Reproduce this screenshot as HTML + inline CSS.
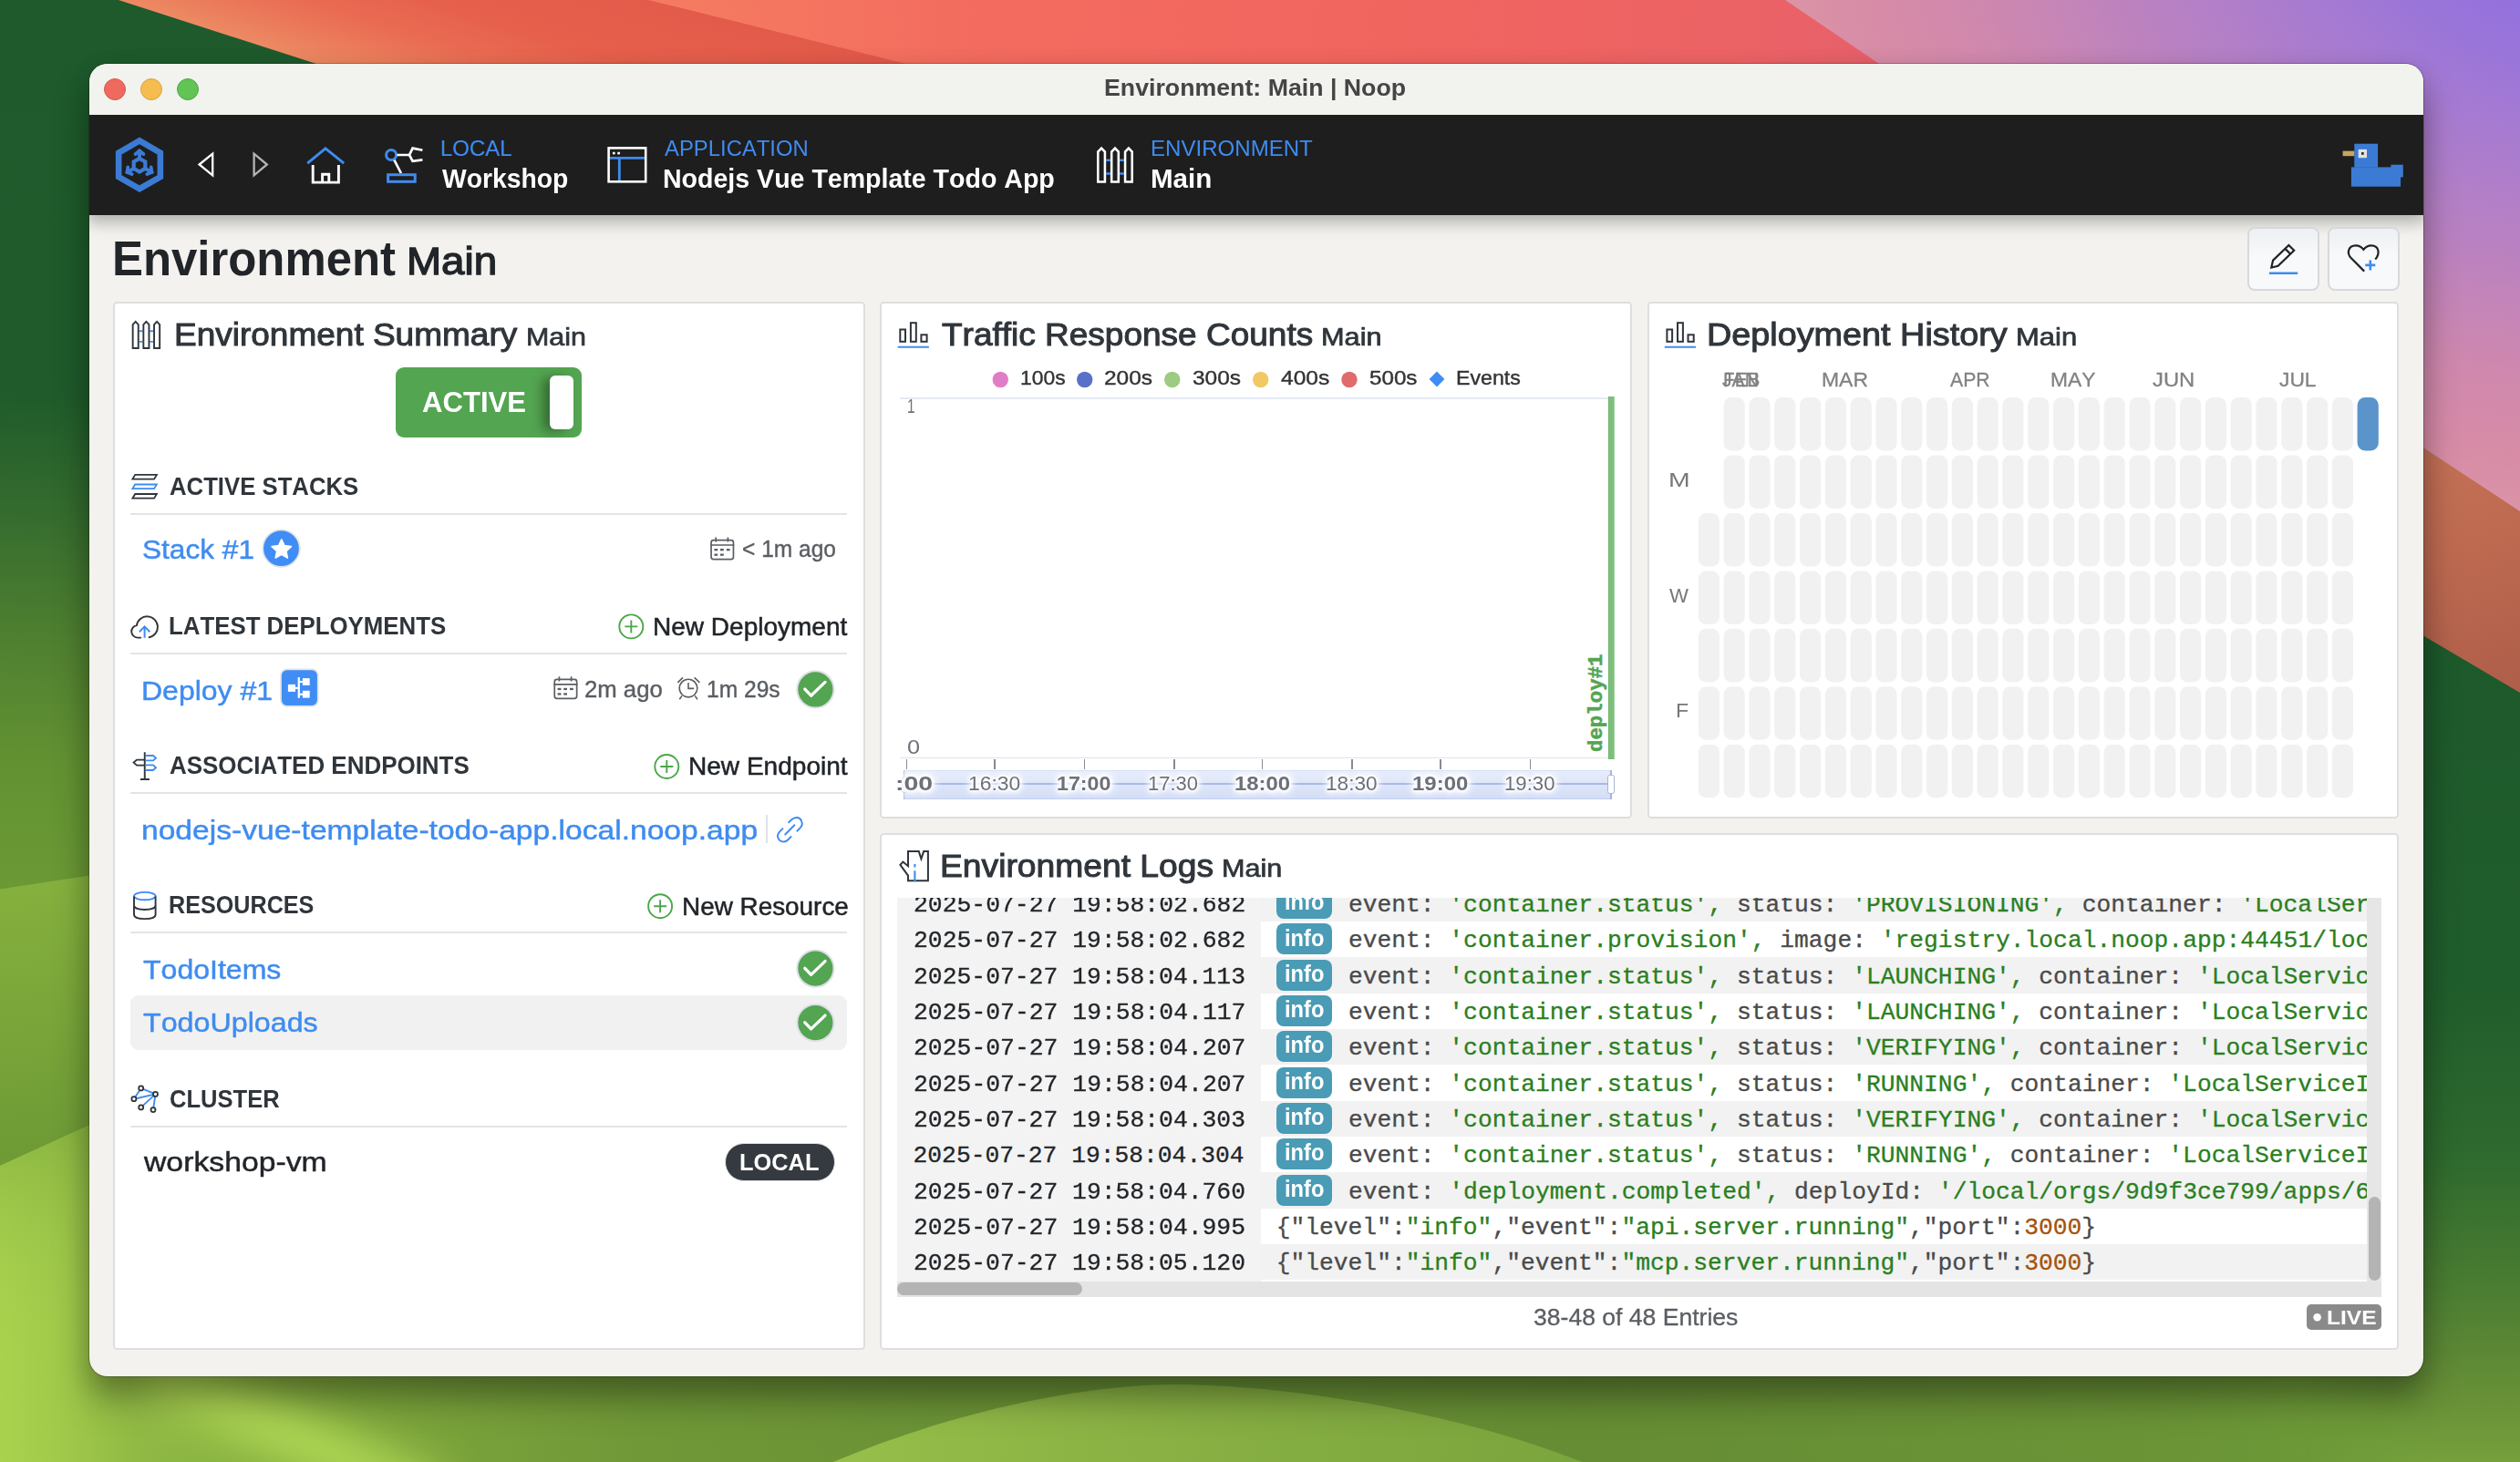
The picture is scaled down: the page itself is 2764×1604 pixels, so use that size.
<!DOCTYPE html>
<html><head><meta charset="utf-8"><title>Environment: Main | Noop</title>
<style>
html,body{margin:0;padding:0;}
body{width:2764px;height:1604px;overflow:hidden;position:relative;background:#1f5a2b;font-family:"Liberation Sans",sans-serif;}
.b{position:absolute;box-sizing:border-box;}
.t{position:absolute;white-space:pre;line-height:1;transform-origin:0 0;font-kerning:none;}
svg{position:absolute;left:0;top:0;}
</style></head><body>
<svg width="2764" height="1604" viewBox="0 0 2764 1604" preserveAspectRatio="none">
<defs>
<linearGradient id="gA" gradientUnits="userSpaceOnUse" x1="130" y1="0" x2="206.8" y2="-238">
 <stop offset="0" stop-color="#ec8a63"/><stop offset="0.1" stop-color="#eb7d5c"/><stop offset="0.25" stop-color="#e96b52"/><stop offset="0.42" stop-color="#e6604c"/><stop offset="0.7" stop-color="#e35b4a"/><stop offset="1" stop-color="#de5648"/></linearGradient>
<linearGradient id="gB" gradientUnits="userSpaceOnUse" x1="760" y1="0" x2="2050" y2="0">
 <stop offset="0" stop-color="#f57a61"/><stop offset="0.25" stop-color="#f36b5f"/><stop offset="0.6" stop-color="#f1655f"/><stop offset="0.9" stop-color="#ec6366"/><stop offset="1" stop-color="#e6606a"/></linearGradient>
<radialGradient id="gP" gradientUnits="userSpaceOnUse" cx="2860" cy="-110" r="950" gradientTransform="translate(2860,-110) scale(1.35,1) translate(-2860,110)">
 <stop offset="0.08" stop-color="#8c6de0"/><stop offset="0.2" stop-color="#9a75d9"/><stop offset="0.3" stop-color="#aa7ccf"/><stop offset="0.42" stop-color="#bb82c0"/><stop offset="0.55" stop-color="#cf88ae"/><stop offset="0.64" stop-color="#d78ba6"/><stop offset="0.74" stop-color="#dc98a7"/><stop offset="1" stop-color="#dd9ea8"/></radialGradient>
<linearGradient id="gO" gradientUnits="userSpaceOnUse" x1="2600" y1="480" x2="2700" y2="760">
 <stop offset="0" stop-color="#c47258"/><stop offset="0.5" stop-color="#be6a51"/><stop offset="1" stop-color="#b05f4a"/></linearGradient>
<linearGradient id="gR" gradientUnits="userSpaceOnUse" x1="0" y1="660" x2="0" y2="1604">
 <stop offset="0" stop-color="#1d592b"/><stop offset="0.45" stop-color="#205d2c"/><stop offset="0.65" stop-color="#2f6a2e"/><stop offset="0.8" stop-color="#4b7d32"/><stop offset="0.92" stop-color="#678f37"/><stop offset="1" stop-color="#75a03c"/></linearGradient>
<linearGradient id="gL" gradientUnits="userSpaceOnUse" x1="0" y1="0" x2="-40" y2="1000">
 <stop offset="0" stop-color="#1e5a2b"/><stop offset="0.43" stop-color="#1f5b2b"/><stop offset="0.55" stop-color="#336a2e"/><stop offset="0.7" stop-color="#4f8030"/><stop offset="0.83" stop-color="#629132"/><stop offset="1" stop-color="#6c9b35"/></linearGradient>
<linearGradient id="gL2" gradientUnits="userSpaceOnUse" x1="0" y1="965" x2="40" y2="1260">
 <stop offset="0" stop-color="#86b13e"/><stop offset="0.5" stop-color="#7aa63a"/><stop offset="1" stop-color="#6f9b36"/></linearGradient>
<linearGradient id="gL3" gradientUnits="userSpaceOnUse" x1="0" y1="0" x2="700" y2="0">
 <stop offset="0" stop-color="#a9d24e"/><stop offset="0.1" stop-color="#a0c94a"/><stop offset="0.22" stop-color="#8fb944"/><stop offset="0.5" stop-color="#82ab3e"/><stop offset="0.75" stop-color="#78a03a"/><stop offset="1" stop-color="#709837"/></linearGradient>
<linearGradient id="gL3v" gradientUnits="userSpaceOnUse" x1="0" y1="1200" x2="0" y2="1500">
 <stop offset="0" stop-color="#7aa63a" stop-opacity="0.75"/><stop offset="0.5" stop-color="#8cb842" stop-opacity="0.3"/><stop offset="1" stop-color="#a9d24e" stop-opacity="0"/></linearGradient>
<linearGradient id="gBot" gradientUnits="userSpaceOnUse" x1="700" y1="0" x2="2764" y2="0">
 <stop offset="0" stop-color="#709837"/><stop offset="0.15" stop-color="#6b9336"/><stop offset="0.5" stop-color="#668d34"/><stop offset="0.8" stop-color="#6a9336"/><stop offset="1" stop-color="#70a03a"/></linearGradient>
<linearGradient id="gH" gradientUnits="userSpaceOnUse" x1="900" y1="0" x2="1760" y2="0">
 <stop offset="0" stop-color="#97bf4a"/><stop offset="0.45" stop-color="#88b043"/><stop offset="1" stop-color="#7aa43d"/></linearGradient>
<linearGradient id="mRg" gradientUnits="userSpaceOnUse" x1="2530" y1="0" x2="2665" y2="0"><stop offset="0" stop-color="#000"/><stop offset="1" stop-color="#fff"/></linearGradient>
<mask id="mR" maskUnits="userSpaceOnUse" x="2480" y="380" width="284" height="1224"><rect x="2480" y="380" width="284" height="1224" fill="url(#mRg)"/></mask>
<filter id="bl" x="-50%" y="-50%" width="200%" height="200%"><feGaussianBlur stdDeviation="22"/></filter>
</defs>
<rect width="2764" height="1604" fill="#1f5a2b"/>
<!-- right strip (drawn bottom-up, overlapping) -->
<!-- bottom strip -->
<rect x="690" y="1440" width="2074" height="164" fill="url(#gBot)"/>
<rect x="2480" y="380" width="284" height="1224" fill="url(#gR)" mask="url(#mR)"/>
<path d="M895,1612 C1040,1548 1190,1519 1290,1519 C1400,1519 1600,1546 1755,1612 Z" fill="url(#gH)"/>
<!-- left strip -->
<rect x="0" y="0" width="400" height="1300" fill="url(#gL)"/>
<polygon points="0,975.4 400,915 400,1500 0,1500" fill="url(#gL2)"/>
<polygon points="0,1279 400,1097 700,1097 700,1604 0,1604" fill="url(#gL3)"/>
<polygon points="0,1279 400,1097 700,1097 700,1604 0,1604" fill="url(#gL3v)"/>
<path d="M480,1650 L150,1496" stroke="#b4dc56" stroke-width="60" filter="url(#bl)" opacity="0.85"/>
<!-- right orange -->
<polygon points="2480,360 2764,360 2764,760 2480,592.3" fill="url(#gO)"/>
<!-- top -->
<polygon points="1900,0 2764,0 2764,561 2480,373.8 2480,120 1900,120" fill="url(#gP)"/>
<polygon points="600,0 1958,0 2135,120 600,120" fill="url(#gB)"/>
<polygon points="100,0 711,0 1196,120 100,120" fill="url(#gA)"/>
<polygon points="0,0 130,0 502,120 0,120" fill="#1e5a2c"/>
</svg>
<div class="b" style="left:98.00px;top:70.00px;width:2560.00px;height:1439.50px;border-radius:20px;background:#f3f2ee;box-shadow:0 0 0 1px rgba(20,30,10,0.30),0 26px 38px 0px rgba(0,0,0,0.34),0 6px 26px rgba(0,0,0,0.11);overflow:hidden;"><div class="b" style="left:0;top:56px;width:100%;height:109.5px;background:#1e1e1e;box-shadow:0 6px 16px 2px rgba(0,0,0,0.28);"></div><div class="b" style="left:0;top:0;width:100%;height:56px;background:#f2f3ee;"></div></div>
<div class="b" style="left:114.00px;top:86.00px;width:24.00px;height:24.00px;border-radius:50%;background:#ee6a5f;border:1px solid #d5574b;"></div>
<div class="b" style="left:154.00px;top:86.00px;width:24.00px;height:24.00px;border-radius:50%;background:#f5bd4f;border:1px solid #d9a23c;"></div>
<div class="b" style="left:194.00px;top:86.00px;width:24.00px;height:24.00px;border-radius:50%;background:#61c454;border:1px solid #4fa944;"></div>
<div class="b" style="left:2465.30px;top:249.20px;width:78.70px;height:69.60px;border-radius:8px;border:2px solid #d6d9dd;background:linear-gradient(#eeeff1,#f8f9fa 45%);"></div>
<div class="b" style="left:2553.10px;top:249.20px;width:78.70px;height:69.60px;border-radius:8px;border:2px solid #d6d9dd;background:linear-gradient(#eeeff1,#f8f9fa 45%);"></div>
<div class="b" style="left:124.00px;top:331.00px;width:825.00px;height:1150.00px;border:2px solid #dedede;border-radius:4.5px;background:#fff;"></div>
<div class="b" style="left:965.00px;top:331.00px;width:825.00px;height:567.00px;border:2px solid #dedede;border-radius:4.5px;background:#fff;"></div>
<div class="b" style="left:1807.00px;top:331.00px;width:824.00px;height:567.00px;border:2px solid #dedede;border-radius:4.5px;background:#fff;"></div>
<div class="b" style="left:965.00px;top:914.00px;width:1666.00px;height:567.00px;border:2px solid #dedede;border-radius:4.5px;background:#fff;"></div>
<div class="b" style="left:434.00px;top:403.20px;width:204.00px;height:76.60px;border-radius:9px;background:#53a551;"></div>
<div class="b" style="left:603.30px;top:411.70px;width:26.00px;height:59.20px;border-radius:6px;background:#fff;box-shadow:-8px 2px 12px rgba(0,0,0,0.34);"></div>
<div class="b" style="left:143.20px;top:563.00px;width:786.20px;height:2.00px;background:#e3e4e6;"></div>
<div class="b" style="left:143.20px;top:715.90px;width:786.20px;height:2.00px;background:#e3e4e6;"></div>
<div class="b" style="left:143.20px;top:869.10px;width:786.20px;height:2.00px;background:#e3e4e6;"></div>
<div class="b" style="left:840.00px;top:894.40px;width:2.00px;height:30.40px;background:#dfe1e7;"></div>
<div class="b" style="left:143.20px;top:1022.40px;width:786.20px;height:2.00px;background:#e3e4e6;"></div>
<div class="b" style="left:143.20px;top:1092.00px;width:786.20px;height:59.80px;border-radius:9px;background:#f1f1f1;"></div>
<div class="b" style="left:143.20px;top:1235.10px;width:786.20px;height:2.00px;background:#e3e4e6;"></div>
<div class="b" style="left:795.20px;top:1253.80px;width:120.50px;height:42.40px;border-radius:22px;background:#343a40;border:1.6px solid #dfe1e6;"></div>
<div class="b" style="left:986.70px;top:436.20px;width:784.00px;height:1.80px;background:#e4e9f4;"></div>
<div class="b" style="left:986.70px;top:831.00px;width:784.00px;height:1.40px;background:#dfe3ec;"></div>
<div class="b" style="left:1764.00px;top:435.40px;width:6.80px;height:398.00px;background:#7fbf7d;border-left:1.4px solid #6ab368;border-right:1px solid #9fd09d;"></div>
<div class="b" style="left:993.50px;top:832.80px;width:1.60px;height:10.80px;background:#868a94;"></div>
<div class="b" style="left:1090.10px;top:832.80px;width:1.60px;height:10.80px;background:#868a94;"></div>
<div class="b" style="left:1188.50px;top:832.80px;width:1.60px;height:10.80px;background:#868a94;"></div>
<div class="b" style="left:1287.10px;top:832.80px;width:1.60px;height:10.80px;background:#868a94;"></div>
<div class="b" style="left:1383.90px;top:832.80px;width:1.60px;height:10.80px;background:#868a94;"></div>
<div class="b" style="left:1482.40px;top:832.80px;width:1.60px;height:10.80px;background:#868a94;"></div>
<div class="b" style="left:1579.40px;top:832.80px;width:1.60px;height:10.80px;background:#868a94;"></div>
<div class="b" style="left:1677.90px;top:832.80px;width:1.60px;height:10.80px;background:#868a94;"></div>
<div class="b" style="left:991.70px;top:844.60px;width:775.00px;height:32.40px;background:linear-gradient(#e6edfb,#d3def6);border-top:1px solid #d5dff5;border-bottom:1px solid #c3cfee;"></div>
<div class="b" style="left:991.70px;top:859.40px;width:775.00px;height:1.50px;background:#a9b9e6;"></div>
<div class="b" style="left:988.60px;top:851.60px;width:6.60px;height:18.60px;background:#fff;border:1.3px solid #acb8d1;border-radius:2px;"></div>
<div class="b" style="left:991.20px;top:845.00px;width:1.30px;height:31.70px;background:#acb8d1;"></div>
<div class="b" style="left:1765.60px;top:844.60px;width:2.20px;height:32.40px;background:#a9b5d2;"></div>
<div class="b" style="left:1762.60px;top:850.40px;width:8.00px;height:20.60px;background:#fff;border:1.5px solid #a9b5d2;border-radius:2.5px;"></div>
<div class="b" style="left:968.00px;top:844.00px;width:17.00px;height:34.00px;background:#fff;"></div>
<div class="b" style="left:984.00px;top:985.00px;width:1628.40px;height:420.60px;overflow:hidden;background:#fff;"><div class="b" style="left:0;top:0;width:399.3px;height:100%;background:#f3f3f3;"></div><div class="b" style="left:399.3px;top:-13.30px;width:1213px;height:39.33px;background:#f2f2f2;"></div><span id="t63" class="t " style="left:17.54px;top:-4.85px;font-size:26.30px;color:#212529;font-family:'Liberation Mono', monospace;transform:scaleX(1.0035);-webkit-text-stroke:0.30px #212529;">2025-07-27 19:58:02.682</span><div class="b" style="left:416.00px;top:-10.90px;width:60.6px;height:34px;border-radius:8px;background:#4a9bb5;"></div><span id="t64" class="t " style="left:424.55px;top:-7.83px;font-size:24.96px;color:#fff;font-weight:700;transform:scaleX(0.9485);">info</span><span id="t65" class="t " style="left:494.89px;top:-4.85px;font-size:26.30px;color:#4a4a4a;font-family:'Liberation Mono', monospace;-webkit-text-stroke:0.30px #4a4a4a;">event: </span><span id="t66" class="t " style="left:605.35px;top:-4.85px;font-size:26.30px;color:#2b7f1f;font-family:'Liberation Mono', monospace;-webkit-text-stroke:0.30px #2b7f1f;">&#x27;container.status&#x27;,</span><span id="t67" class="t " style="left:905.17px;top:-4.85px;font-size:26.30px;color:#4a4a4a;font-family:'Liberation Mono', monospace;-webkit-text-stroke:0.30px #4a4a4a;"> status: </span><span id="t68" class="t " style="left:1047.19px;top:-4.85px;font-size:26.30px;color:#2b7f1f;font-family:'Liberation Mono', monospace;-webkit-text-stroke:0.30px #2b7f1f;">&#x27;PROVISIONING&#x27;,</span><span id="t69" class="t " style="left:1283.89px;top:-4.85px;font-size:26.30px;color:#4a4a4a;font-family:'Liberation Mono', monospace;-webkit-text-stroke:0.30px #4a4a4a;"> container: </span><span id="t70" class="t " style="left:1473.25px;top:-4.85px;font-size:26.30px;color:#2b7f1f;font-family:'Liberation Mono', monospace;-webkit-text-stroke:0.30px #2b7f1f;">&#x27;LocalServiceInstance&#x27;</span><span id="t71" class="t " style="left:17.54px;top:34.48px;font-size:26.30px;color:#212529;font-family:'Liberation Mono', monospace;transform:scaleX(1.0035);-webkit-text-stroke:0.30px #212529;">2025-07-27 19:58:02.682</span><div class="b" style="left:416.00px;top:28.43px;width:60.6px;height:34px;border-radius:8px;background:#4a9bb5;"></div><span id="t72" class="t " style="left:424.55px;top:31.50px;font-size:24.96px;color:#fff;font-weight:700;transform:scaleX(0.9485);">info</span><span id="t73" class="t " style="left:494.89px;top:34.48px;font-size:26.30px;color:#4a4a4a;font-family:'Liberation Mono', monospace;-webkit-text-stroke:0.30px #4a4a4a;">event: </span><span id="t74" class="t " style="left:605.35px;top:34.48px;font-size:26.30px;color:#2b7f1f;font-family:'Liberation Mono', monospace;-webkit-text-stroke:0.30px #2b7f1f;">&#x27;container.provision&#x27;,</span><span id="t75" class="t " style="left:952.51px;top:34.48px;font-size:26.30px;color:#4a4a4a;font-family:'Liberation Mono', monospace;-webkit-text-stroke:0.30px #4a4a4a;"> image: </span><span id="t76" class="t " style="left:1078.75px;top:34.48px;font-size:26.30px;color:#2b7f1f;font-family:'Liberation Mono', monospace;-webkit-text-stroke:0.30px #2b7f1f;">&#x27;registry.local.noop.app:44451/local/todo&#x27;</span><div class="b" style="left:399.3px;top:65.36px;width:1213px;height:39.33px;background:#f2f2f2;"></div><span id="t77" class="t " style="left:17.55px;top:73.81px;font-size:26.30px;color:#212529;font-family:'Liberation Mono', monospace;transform:scaleX(1.0029);-webkit-text-stroke:0.30px #212529;">2025-07-27 19:58:04.113</span><div class="b" style="left:416.00px;top:67.76px;width:60.6px;height:34px;border-radius:8px;background:#4a9bb5;"></div><span id="t78" class="t " style="left:424.55px;top:70.83px;font-size:24.96px;color:#fff;font-weight:700;transform:scaleX(0.9485);">info</span><span id="t79" class="t " style="left:494.89px;top:73.81px;font-size:26.30px;color:#4a4a4a;font-family:'Liberation Mono', monospace;-webkit-text-stroke:0.30px #4a4a4a;">event: </span><span id="t80" class="t " style="left:605.35px;top:73.81px;font-size:26.30px;color:#2b7f1f;font-family:'Liberation Mono', monospace;-webkit-text-stroke:0.30px #2b7f1f;">&#x27;container.status&#x27;,</span><span id="t81" class="t " style="left:905.17px;top:73.81px;font-size:26.30px;color:#4a4a4a;font-family:'Liberation Mono', monospace;-webkit-text-stroke:0.30px #4a4a4a;"> status: </span><span id="t82" class="t " style="left:1047.19px;top:73.81px;font-size:26.30px;color:#2b7f1f;font-family:'Liberation Mono', monospace;-webkit-text-stroke:0.30px #2b7f1f;">&#x27;LAUNCHING&#x27;,</span><span id="t83" class="t " style="left:1236.55px;top:73.81px;font-size:26.30px;color:#4a4a4a;font-family:'Liberation Mono', monospace;-webkit-text-stroke:0.30px #4a4a4a;"> container: </span><span id="t84" class="t " style="left:1425.91px;top:73.81px;font-size:26.30px;color:#2b7f1f;font-family:'Liberation Mono', monospace;-webkit-text-stroke:0.30px #2b7f1f;">&#x27;LocalServiceInstance&#x27;</span><span id="t85" class="t " style="left:17.54px;top:113.14px;font-size:26.30px;color:#212529;font-family:'Liberation Mono', monospace;transform:scaleX(1.0040);-webkit-text-stroke:0.30px #212529;">2025-07-27 19:58:04.117</span><div class="b" style="left:416.00px;top:107.09px;width:60.6px;height:34px;border-radius:8px;background:#4a9bb5;"></div><span id="t86" class="t " style="left:424.55px;top:110.16px;font-size:24.96px;color:#fff;font-weight:700;transform:scaleX(0.9485);">info</span><span id="t87" class="t " style="left:494.89px;top:113.14px;font-size:26.30px;color:#4a4a4a;font-family:'Liberation Mono', monospace;-webkit-text-stroke:0.30px #4a4a4a;">event: </span><span id="t88" class="t " style="left:605.35px;top:113.14px;font-size:26.30px;color:#2b7f1f;font-family:'Liberation Mono', monospace;-webkit-text-stroke:0.30px #2b7f1f;">&#x27;container.status&#x27;,</span><span id="t89" class="t " style="left:905.17px;top:113.14px;font-size:26.30px;color:#4a4a4a;font-family:'Liberation Mono', monospace;-webkit-text-stroke:0.30px #4a4a4a;"> status: </span><span id="t90" class="t " style="left:1047.19px;top:113.14px;font-size:26.30px;color:#2b7f1f;font-family:'Liberation Mono', monospace;-webkit-text-stroke:0.30px #2b7f1f;">&#x27;LAUNCHING&#x27;,</span><span id="t91" class="t " style="left:1236.55px;top:113.14px;font-size:26.30px;color:#4a4a4a;font-family:'Liberation Mono', monospace;-webkit-text-stroke:0.30px #4a4a4a;"> container: </span><span id="t92" class="t " style="left:1425.91px;top:113.14px;font-size:26.30px;color:#2b7f1f;font-family:'Liberation Mono', monospace;-webkit-text-stroke:0.30px #2b7f1f;">&#x27;LocalServiceInstance&#x27;</span><div class="b" style="left:399.3px;top:144.02px;width:1213px;height:39.33px;background:#f2f2f2;"></div><span id="t93" class="t " style="left:17.54px;top:152.47px;font-size:26.30px;color:#212529;font-family:'Liberation Mono', monospace;transform:scaleX(1.0040);-webkit-text-stroke:0.30px #212529;">2025-07-27 19:58:04.207</span><div class="b" style="left:416.00px;top:146.42px;width:60.6px;height:34px;border-radius:8px;background:#4a9bb5;"></div><span id="t94" class="t " style="left:424.55px;top:149.49px;font-size:24.96px;color:#fff;font-weight:700;transform:scaleX(0.9485);">info</span><span id="t95" class="t " style="left:494.89px;top:152.47px;font-size:26.30px;color:#4a4a4a;font-family:'Liberation Mono', monospace;-webkit-text-stroke:0.30px #4a4a4a;">event: </span><span id="t96" class="t " style="left:605.35px;top:152.47px;font-size:26.30px;color:#2b7f1f;font-family:'Liberation Mono', monospace;-webkit-text-stroke:0.30px #2b7f1f;">&#x27;container.status&#x27;,</span><span id="t97" class="t " style="left:905.17px;top:152.47px;font-size:26.30px;color:#4a4a4a;font-family:'Liberation Mono', monospace;-webkit-text-stroke:0.30px #4a4a4a;"> status: </span><span id="t98" class="t " style="left:1047.19px;top:152.47px;font-size:26.30px;color:#2b7f1f;font-family:'Liberation Mono', monospace;-webkit-text-stroke:0.30px #2b7f1f;">&#x27;VERIFYING&#x27;,</span><span id="t99" class="t " style="left:1236.55px;top:152.47px;font-size:26.30px;color:#4a4a4a;font-family:'Liberation Mono', monospace;-webkit-text-stroke:0.30px #4a4a4a;"> container: </span><span id="t100" class="t " style="left:1425.91px;top:152.47px;font-size:26.30px;color:#2b7f1f;font-family:'Liberation Mono', monospace;-webkit-text-stroke:0.30px #2b7f1f;">&#x27;LocalServiceInstance&#x27;</span><span id="t101" class="t " style="left:17.54px;top:191.80px;font-size:26.30px;color:#212529;font-family:'Liberation Mono', monospace;transform:scaleX(1.0040);-webkit-text-stroke:0.30px #212529;">2025-07-27 19:58:04.207</span><div class="b" style="left:416.00px;top:185.75px;width:60.6px;height:34px;border-radius:8px;background:#4a9bb5;"></div><span id="t102" class="t " style="left:424.55px;top:188.82px;font-size:24.96px;color:#fff;font-weight:700;transform:scaleX(0.9485);">info</span><span id="t103" class="t " style="left:494.89px;top:191.80px;font-size:26.30px;color:#4a4a4a;font-family:'Liberation Mono', monospace;-webkit-text-stroke:0.30px #4a4a4a;">event: </span><span id="t104" class="t " style="left:605.35px;top:191.80px;font-size:26.30px;color:#2b7f1f;font-family:'Liberation Mono', monospace;-webkit-text-stroke:0.30px #2b7f1f;">&#x27;container.status&#x27;,</span><span id="t105" class="t " style="left:905.17px;top:191.80px;font-size:26.30px;color:#4a4a4a;font-family:'Liberation Mono', monospace;-webkit-text-stroke:0.30px #4a4a4a;"> status: </span><span id="t106" class="t " style="left:1047.19px;top:191.80px;font-size:26.30px;color:#2b7f1f;font-family:'Liberation Mono', monospace;-webkit-text-stroke:0.30px #2b7f1f;">&#x27;RUNNING&#x27;,</span><span id="t107" class="t " style="left:1204.99px;top:191.80px;font-size:26.30px;color:#4a4a4a;font-family:'Liberation Mono', monospace;-webkit-text-stroke:0.30px #4a4a4a;"> container: </span><span id="t108" class="t " style="left:1394.35px;top:191.80px;font-size:26.30px;color:#2b7f1f;font-family:'Liberation Mono', monospace;-webkit-text-stroke:0.30px #2b7f1f;">&#x27;LocalServiceInstance&#x27;</span><div class="b" style="left:399.3px;top:222.68px;width:1213px;height:39.33px;background:#f2f2f2;"></div><span id="t109" class="t " style="left:17.55px;top:231.13px;font-size:26.30px;color:#212529;font-family:'Liberation Mono', monospace;transform:scaleX(1.0029);-webkit-text-stroke:0.30px #212529;">2025-07-27 19:58:04.303</span><div class="b" style="left:416.00px;top:225.08px;width:60.6px;height:34px;border-radius:8px;background:#4a9bb5;"></div><span id="t110" class="t " style="left:424.55px;top:228.15px;font-size:24.96px;color:#fff;font-weight:700;transform:scaleX(0.9485);">info</span><span id="t111" class="t " style="left:494.89px;top:231.13px;font-size:26.30px;color:#4a4a4a;font-family:'Liberation Mono', monospace;-webkit-text-stroke:0.30px #4a4a4a;">event: </span><span id="t112" class="t " style="left:605.35px;top:231.13px;font-size:26.30px;color:#2b7f1f;font-family:'Liberation Mono', monospace;-webkit-text-stroke:0.30px #2b7f1f;">&#x27;container.status&#x27;,</span><span id="t113" class="t " style="left:905.17px;top:231.13px;font-size:26.30px;color:#4a4a4a;font-family:'Liberation Mono', monospace;-webkit-text-stroke:0.30px #4a4a4a;"> status: </span><span id="t114" class="t " style="left:1047.19px;top:231.13px;font-size:26.30px;color:#2b7f1f;font-family:'Liberation Mono', monospace;-webkit-text-stroke:0.30px #2b7f1f;">&#x27;VERIFYING&#x27;,</span><span id="t115" class="t " style="left:1236.55px;top:231.13px;font-size:26.30px;color:#4a4a4a;font-family:'Liberation Mono', monospace;-webkit-text-stroke:0.30px #4a4a4a;"> container: </span><span id="t116" class="t " style="left:1425.91px;top:231.13px;font-size:26.30px;color:#2b7f1f;font-family:'Liberation Mono', monospace;-webkit-text-stroke:0.30px #2b7f1f;">&#x27;LocalServiceInstance&#x27;</span><span id="t117" class="t " style="left:17.55px;top:270.46px;font-size:26.30px;color:#212529;font-family:'Liberation Mono', monospace;-webkit-text-stroke:0.30px #212529;">2025-07-27 19:58:04.304</span><div class="b" style="left:416.00px;top:264.41px;width:60.6px;height:34px;border-radius:8px;background:#4a9bb5;"></div><span id="t118" class="t " style="left:424.55px;top:267.48px;font-size:24.96px;color:#fff;font-weight:700;transform:scaleX(0.9485);">info</span><span id="t119" class="t " style="left:494.89px;top:270.46px;font-size:26.30px;color:#4a4a4a;font-family:'Liberation Mono', monospace;-webkit-text-stroke:0.30px #4a4a4a;">event: </span><span id="t120" class="t " style="left:605.35px;top:270.46px;font-size:26.30px;color:#2b7f1f;font-family:'Liberation Mono', monospace;-webkit-text-stroke:0.30px #2b7f1f;">&#x27;container.status&#x27;,</span><span id="t121" class="t " style="left:905.17px;top:270.46px;font-size:26.30px;color:#4a4a4a;font-family:'Liberation Mono', monospace;-webkit-text-stroke:0.30px #4a4a4a;"> status: </span><span id="t122" class="t " style="left:1047.19px;top:270.46px;font-size:26.30px;color:#2b7f1f;font-family:'Liberation Mono', monospace;-webkit-text-stroke:0.30px #2b7f1f;">&#x27;RUNNING&#x27;,</span><span id="t123" class="t " style="left:1204.99px;top:270.46px;font-size:26.30px;color:#4a4a4a;font-family:'Liberation Mono', monospace;-webkit-text-stroke:0.30px #4a4a4a;"> container: </span><span id="t124" class="t " style="left:1394.35px;top:270.46px;font-size:26.30px;color:#2b7f1f;font-family:'Liberation Mono', monospace;-webkit-text-stroke:0.30px #2b7f1f;">&#x27;LocalServiceInstance&#x27;</span><div class="b" style="left:399.3px;top:301.34px;width:1213px;height:39.33px;background:#f2f2f2;"></div><span id="t125" class="t " style="left:17.55px;top:309.79px;font-size:26.30px;color:#212529;font-family:'Liberation Mono', monospace;transform:scaleX(1.0028);-webkit-text-stroke:0.30px #212529;">2025-07-27 19:58:04.760</span><div class="b" style="left:416.00px;top:303.74px;width:60.6px;height:34px;border-radius:8px;background:#4a9bb5;"></div><span id="t126" class="t " style="left:424.55px;top:306.81px;font-size:24.96px;color:#fff;font-weight:700;transform:scaleX(0.9485);">info</span><span id="t127" class="t " style="left:494.89px;top:309.79px;font-size:26.30px;color:#4a4a4a;font-family:'Liberation Mono', monospace;-webkit-text-stroke:0.30px #4a4a4a;">event: </span><span id="t128" class="t " style="left:605.35px;top:309.79px;font-size:26.30px;color:#2b7f1f;font-family:'Liberation Mono', monospace;-webkit-text-stroke:0.30px #2b7f1f;">&#x27;deployment.completed&#x27;,</span><span id="t129" class="t " style="left:968.29px;top:309.79px;font-size:26.30px;color:#4a4a4a;font-family:'Liberation Mono', monospace;-webkit-text-stroke:0.30px #4a4a4a;"> deployId: </span><span id="t130" class="t " style="left:1141.87px;top:309.79px;font-size:26.30px;color:#2b7f1f;font-family:'Liberation Mono', monospace;-webkit-text-stroke:0.30px #2b7f1f;">&#x27;/local/orgs/9d9f3ce799/apps/6a1f2c&#x27;</span><span id="t131" class="t " style="left:17.55px;top:349.12px;font-size:26.30px;color:#212529;font-family:'Liberation Mono', monospace;transform:scaleX(1.0029);-webkit-text-stroke:0.30px #212529;">2025-07-27 19:58:04.995</span><span id="t132" class="t " style="left:415.68px;top:349.12px;font-size:26.30px;color:#4a4a4a;font-family:'Liberation Mono', monospace;-webkit-text-stroke:0.30px #4a4a4a;">{&quot;level&quot;:</span><span id="t133" class="t " style="left:557.70px;top:349.12px;font-size:26.30px;color:#2b7f1f;font-family:'Liberation Mono', monospace;-webkit-text-stroke:0.30px #2b7f1f;">&quot;info&quot;</span><span id="t134" class="t " style="left:652.38px;top:349.12px;font-size:26.30px;color:#4a4a4a;font-family:'Liberation Mono', monospace;-webkit-text-stroke:0.30px #4a4a4a;">,&quot;event&quot;:</span><span id="t135" class="t " style="left:794.40px;top:349.12px;font-size:26.30px;color:#2b7f1f;font-family:'Liberation Mono', monospace;-webkit-text-stroke:0.30px #2b7f1f;">&quot;api.server.running&quot;</span><span id="t136" class="t " style="left:1110.00px;top:349.12px;font-size:26.30px;color:#4a4a4a;font-family:'Liberation Mono', monospace;-webkit-text-stroke:0.30px #4a4a4a;">,&quot;port&quot;:</span><span id="t137" class="t " style="left:1236.24px;top:349.12px;font-size:26.30px;color:#a4520c;font-family:'Liberation Mono', monospace;-webkit-text-stroke:0.30px #a4520c;">3000</span><span id="t138" class="t " style="left:1299.36px;top:349.12px;font-size:26.30px;color:#4a4a4a;font-family:'Liberation Mono', monospace;-webkit-text-stroke:0.30px #4a4a4a;">}</span><div class="b" style="left:399.3px;top:380.00px;width:1213px;height:39.33px;background:#f2f2f2;"></div><span id="t139" class="t " style="left:17.55px;top:388.45px;font-size:26.30px;color:#212529;font-family:'Liberation Mono', monospace;transform:scaleX(1.0028);-webkit-text-stroke:0.30px #212529;">2025-07-27 19:58:05.120</span><span id="t140" class="t " style="left:415.68px;top:388.45px;font-size:26.30px;color:#4a4a4a;font-family:'Liberation Mono', monospace;-webkit-text-stroke:0.30px #4a4a4a;">{&quot;level&quot;:</span><span id="t141" class="t " style="left:557.70px;top:388.45px;font-size:26.30px;color:#2b7f1f;font-family:'Liberation Mono', monospace;-webkit-text-stroke:0.30px #2b7f1f;">&quot;info&quot;</span><span id="t142" class="t " style="left:652.38px;top:388.45px;font-size:26.30px;color:#4a4a4a;font-family:'Liberation Mono', monospace;-webkit-text-stroke:0.30px #4a4a4a;">,&quot;event&quot;:</span><span id="t143" class="t " style="left:794.40px;top:388.45px;font-size:26.30px;color:#2b7f1f;font-family:'Liberation Mono', monospace;-webkit-text-stroke:0.30px #2b7f1f;">&quot;mcp.server.running&quot;</span><span id="t144" class="t " style="left:1110.00px;top:388.45px;font-size:26.30px;color:#4a4a4a;font-family:'Liberation Mono', monospace;-webkit-text-stroke:0.30px #4a4a4a;">,&quot;port&quot;:</span><span id="t145" class="t " style="left:1236.24px;top:388.45px;font-size:26.30px;color:#a4520c;font-family:'Liberation Mono', monospace;-webkit-text-stroke:0.30px #a4520c;">3000</span><span id="t146" class="t " style="left:1299.36px;top:388.45px;font-size:26.30px;color:#4a4a4a;font-family:'Liberation Mono', monospace;-webkit-text-stroke:0.30px #4a4a4a;">}</span><div class="b" style="left:1612.20px;top:0;width:16.2px;height:100%;background:#e6e6e6;"></div><div class="b" style="left:1613.70px;top:328.00px;width:13.4px;height:92px;border-radius:7px;background:#b4b4b4;"></div></div>
<div class="b" style="left:984.00px;top:1405.60px;width:1628.40px;height:17.40px;background:#e4e4e4;"></div>
<div class="b" style="left:984.00px;top:1407.00px;width:203.40px;height:13.80px;border-radius:7px;background:#b4b4b4;"></div>
<div class="b" style="left:2529.60px;top:1430.60px;width:82.80px;height:28.80px;border-radius:5px;background:#8a8a8a;"></div>
<svg width="2764" height="1604" viewBox="0 0 2764 1604" fill="none"><polygon points="153.00,154.40 130.14,167.60 130.14,194.00 153.00,207.20 175.86,194.00 175.86,167.60" stroke="#3b7bd4" stroke-width="6.6" stroke-linejoin="miter"/>
<polygon points="153.00,173.90 146.68,177.55 146.68,184.85 153.00,188.50 159.32,184.85 159.32,177.55" stroke="#3b7bd4" stroke-width="4.2"/>
<path d="M153.00,173.20 L153.00,165.60" stroke="#3b7bd4" stroke-width="4" stroke-linecap="round"/>
<path d="M153.00,165.60 L148.59,169.05" stroke="#3b7bd4" stroke-width="3.8" stroke-linecap="round"/>
<path d="M153.00,165.60 L157.41,169.05" stroke="#3b7bd4" stroke-width="3.8" stroke-linecap="round"/>
<path d="M146.07,185.20 L139.49,189.00" stroke="#3b7bd4" stroke-width="4" stroke-linecap="round"/>
<path d="M139.49,189.00 L144.68,191.10" stroke="#3b7bd4" stroke-width="3.8" stroke-linecap="round"/>
<path d="M139.49,189.00 L140.27,183.45" stroke="#3b7bd4" stroke-width="3.8" stroke-linecap="round"/>
<path d="M159.93,185.20 L166.51,189.00" stroke="#3b7bd4" stroke-width="4" stroke-linecap="round"/>
<path d="M166.51,189.00 L165.73,183.45" stroke="#3b7bd4" stroke-width="3.8" stroke-linecap="round"/>
<path d="M166.51,189.00 L161.32,191.10" stroke="#3b7bd4" stroke-width="3.8" stroke-linecap="round"/>
<polygon points="218.6,180.5 233.2,168.7 233.2,192.3" stroke="#fff" stroke-width="2.3" stroke-linejoin="miter"/>
<polygon points="292.8,180.5 278.6,168.7 278.6,192.3" stroke="#b4b4b4" stroke-width="2.3" stroke-linejoin="miter"/>
<path d="M337.2,179.2 L357,162.9 L377.2,179.2" stroke="#3f8cf0" stroke-width="3"/>
<path d="M343.2,181 V200.1 H371.4 V181 M353.6,200.1 V191.2 H360.8 V200.1" stroke="#fff" stroke-width="2.9"/>
<circle cx="429.1" cy="170" r="5.5" stroke="#3f8cf0" stroke-width="3"/>
<path d="M435.4,170 H449 M449,170 L452.6,162.6 L463.4,164.8 M449,170 L452.6,176.8 L463.4,175.4 M432.4,175.6 L439.9,190" stroke="#fff" stroke-width="2.7"/>
<rect x="425.6" y="191.7" width="29.6" height="7.6" stroke="#3f8cf0" stroke-width="3"/>
<rect x="667.6" y="162.4" width="40.6" height="36.9" stroke="#fff" stroke-width="2.6"/>
<path d="M669,173.3 H707 M679.3,173.3 V198" stroke="#3f8cf0" stroke-width="2.8"/>
<circle cx="673.3" cy="167.9" r="1.5" fill="#fff"/><circle cx="678.6" cy="167.9" r="1.5" fill="#fff"/>
<path d="M1213.19,175.70 H1217.90 M1213.19,190.50 H1217.90" stroke="#3f8cf0" stroke-width="2.42"/><path d="M1228.10,175.70 H1232.81 M1228.10,190.50 H1232.81" stroke="#3f8cf0" stroke-width="2.42"/><path d="M1204.28,199.42 V166.50 L1208.10,162.61 L1211.92,166.50 V199.42 Z" stroke="#fff" stroke-width="2.55" stroke-linejoin="miter"/><path d="M1219.18,199.42 V166.50 L1223.00,162.61 L1226.82,166.50 V199.42 Z" stroke="#fff" stroke-width="2.55" stroke-linejoin="miter"/><path d="M1234.08,199.42 V166.50 L1237.90,162.61 L1241.73,166.50 V199.42 Z" stroke="#fff" stroke-width="2.55" stroke-linejoin="miter"/>
<rect x="2569.6" y="165.6" width="13" height="5.6" fill="#c9a45c"/>
<rect x="2582.3" y="157.7" width="25.8" height="26" fill="#3b7bd4"/>
<rect x="2586.7" y="163.9" width="9.3" height="9.3" fill="#e4e4e4"/><rect x="2590" y="167" width="2.7" height="2.8" fill="#333"/>
<rect x="2578.9" y="183.4" width="54.2" height="21.3" fill="#3b7bd4"/>
<rect x="2622.4" y="180.7" width="13.4" height="13.7" fill="#3b7bd4"/>
<path d="M2491.3,293.6 L2493.1,285.6 L2510.4,269 L2516.2,274.8 L2498.6,291.8 Z M2506.4,272.9 L2512.3,278.7" stroke="#1f2327" stroke-width="2.2" stroke-linejoin="miter"/>
<path d="M2488.9,299.7 H2520.2" stroke="#3f8cf0" stroke-width="2.4"/>
<path d="M2593.2,297.6 L2578.9,283.3 C2573.6,277.9 2575.5,269.6 2583.7,269.4 C2587.6,269.3 2590.4,271.2 2592.4,273.8 C2594.4,271.2 2597.2,269.3 2601.1,269.4 C2609.4,269.6 2610.8,278.6 2605.2,284.6" stroke="#1f2327" stroke-width="2.2"/>
<path d="M2594.3,290.9 H2605.3 M2599.8,285.4 V296.4" stroke="#3f8cf0" stroke-width="2.6"/>
<path d="M152.70,363.27 H156.40 M152.70,374.89 H156.40" stroke="#3f8cf0" stroke-width="1.80"/><path d="M164.40,363.27 H168.10 M164.40,374.89 H168.10" stroke="#3f8cf0" stroke-width="1.80"/><path d="M145.65,381.95 V356.05 L148.70,352.93 L151.75,356.05 V381.95 Z" stroke="#2f353b" stroke-width="1.90" stroke-linejoin="miter"/><path d="M157.35,381.95 V356.05 L160.40,352.93 L163.45,356.05 V381.95 Z" stroke="#2f353b" stroke-width="1.90" stroke-linejoin="miter"/><path d="M169.05,381.95 V356.05 L172.10,352.93 L175.15,356.05 V381.95 Z" stroke="#2f353b" stroke-width="1.90" stroke-linejoin="miter"/>
<polygon points="148.2,520.90 171.9,520.90 169.1,525.60 145.4,525.60" stroke="#2f353b" stroke-width="1.8"/>
<polygon points="148.2,531.50 171.9,531.50 169.1,536.20 145.4,536.20" stroke="#3f8cf0" stroke-width="1.8"/>
<polygon points="148.2,542.00 171.9,542.00 169.1,546.70 145.4,546.70" stroke="#2f353b" stroke-width="1.8"/>
<circle cx="308.5" cy="601.7" r="20.3" fill="#408ef5" stroke="#e3e4e8" stroke-width="1.8"/>
<polygon points="308.80,591.80 305.63,598.63 298.15,599.54 303.66,604.67 302.22,612.06 308.80,608.40 315.38,612.06 313.94,604.67 319.45,599.54 311.97,598.63" fill="#fff" stroke="#fff" stroke-width="1.6" stroke-linejoin="round"/>
<rect x="780.05" y="592.60" width="24.4" height="21" rx="2.6" stroke="#5a5e63" stroke-width="1.7"/><path d="M779.20,598.00 H805.20 M785.20,589.40 V594.60 M798.40,589.40 V594.60" stroke="#5a5e63" stroke-width="1.7"/><rect x="783.40" y="602.00" width="3.8" height="2.3" fill="#5a5e63"/><rect x="790.00" y="602.00" width="3.8" height="2.3" fill="#5a5e63"/><rect x="796.80" y="602.00" width="3.8" height="2.3" fill="#5a5e63"/><rect x="783.40" y="607.50" width="3.8" height="2.3" fill="#5a5e63"/><rect x="790.00" y="607.50" width="3.8" height="2.3" fill="#5a5e63"/>
<path d="M154.3,699.6 H150.8 A6.8,6.8 0 0 1 149.9,686.1 A11.6,11.6 0 1 1 163.6,699.3" stroke="#2f353b" stroke-width="1.9" stroke-linecap="round"/>
<path d="M158.6,699.8 V687.6 M152.9,693.2 L158.6,687.4 L164.3,693.2" stroke="#3f8cf0" stroke-width="2"/>
<circle cx="692.30" cy="687.40" r="13" stroke="#4ca64a" stroke-width="1.9"/><path d="M685.30,687.40 H699.30 M692.30,680.40 V694.40" stroke="#4ca64a" stroke-width="1.9"/>
<rect x="308" y="734.4" width="40.8" height="40.4" rx="6.5" fill="#408ef5" stroke="#e3e4e8" stroke-width="1.8"/>
<rect x="315.9" y="750.9" width="8.1" height="8" fill="#fff"/><rect x="326.7" y="743.1" width="2.2" height="22.7" fill="#fff"/><rect x="331.9" y="744.1" width="7.8" height="7.8" fill="#fff"/><rect x="331.9" y="757.8" width="7.8" height="7.8" fill="#fff"/>
<rect x="324" y="753.8" width="3" height="2.1" fill="#fff"/><rect x="328.6" y="747" width="3.5" height="2.1" fill="#fff"/><rect x="328.6" y="760.7" width="3.5" height="2.1" fill="#fff"/>
<rect x="608.25" y="745.40" width="24.4" height="21" rx="2.6" stroke="#5a5e63" stroke-width="1.7"/><path d="M607.40,750.80 H633.40 M613.40,742.20 V747.40 M626.60,742.20 V747.40" stroke="#5a5e63" stroke-width="1.7"/><rect x="611.60" y="754.80" width="3.8" height="2.3" fill="#5a5e63"/><rect x="618.20" y="754.80" width="3.8" height="2.3" fill="#5a5e63"/><rect x="625.00" y="754.80" width="3.8" height="2.3" fill="#5a5e63"/><rect x="611.60" y="760.30" width="3.8" height="2.3" fill="#5a5e63"/><rect x="618.20" y="760.30" width="3.8" height="2.3" fill="#5a5e63"/>
<circle cx="755" cy="755.1" r="9.8" stroke="#5a5e63" stroke-width="1.6"/><path d="M755,749 V755.4 H761.2 M743.3,748.8 L749,743.3 M761.6,743.3 L767.4,748.8 M748,763.4 L745.3,767.2 M762.2,763.4 L764.9,767.2" stroke="#5a5e63" stroke-width="1.6"/>
<circle cx="894.40" cy="756.40" r="20.1" fill="#53a551" stroke="#dedee8" stroke-width="2"/>
<path d="M882.80,756.10 L889.60,763.20 L905.00,748.40" stroke="#fff" stroke-width="3.3" stroke-linecap="round" stroke-linejoin="round"/>
<path d="M158.75,825.3 V855 M154,855 H163.9" stroke="#2f353b" stroke-width="1.9"/>
<path d="M158.75,833.6 H150 L146.6,836.6 L150,839.6 H158.75" stroke="#2f353b" stroke-width="1.9"/>
<path d="M159.6,829 H168 L171,831.7 L168,834.4 H159.6 M159.6,839.4 H168 L171,842.2 L168,845 H159.6" stroke="#3f8cf0" stroke-width="1.9"/>
<circle cx="731.30" cy="841.00" r="13" stroke="#4ca64a" stroke-width="1.9"/><path d="M724.30,841.00 H738.30 M731.30,834.00 V848.00" stroke="#4ca64a" stroke-width="1.9"/>
<path d="M860.7,916 L871.9,904.8 M864.6,902.8 L868.2,899.2 C872.6,895.2 877.6,897 879,900.6 C880.6,904 879.6,906.4 877.6,908.4 L873.8,912.2 M859,908.6 L855.2,912.4 C851.2,916.8 853.4,921.4 856.6,922.8 C860,924.2 862.6,923 864.4,921.2 L868.1,917.4" stroke="#3f8cf0" stroke-width="1.95" stroke-linecap="butt"/>
<ellipse cx="158.8" cy="983.1" rx="11.8" ry="4.2" stroke="#3f8cf0" stroke-width="1.9"/>
<path d="M147,983.4 V1003.8 C147,1009.6 170.6,1009.6 170.6,1003.8 V983.4 M147,993.6 C147,999.4 170.6,999.4 170.6,993.6" stroke="#2f353b" stroke-width="1.9"/>
<circle cx="724.10" cy="994.20" r="13" stroke="#4ca64a" stroke-width="1.9"/><path d="M717.10,994.20 H731.10 M724.10,987.20 V1001.20" stroke="#4ca64a" stroke-width="1.9"/>
<circle cx="894.40" cy="1062.60" r="20.1" fill="#53a551" stroke="#dedee8" stroke-width="2"/>
<path d="M882.80,1062.30 L889.60,1069.40 L905.00,1054.60" stroke="#fff" stroke-width="3.3" stroke-linecap="round" stroke-linejoin="round"/>
<circle cx="894.40" cy="1122.10" r="20.1" fill="#53a551" stroke="#dedee8" stroke-width="2"/>
<path d="M882.80,1121.80 L889.60,1128.90 L905.00,1114.10" stroke="#fff" stroke-width="3.3" stroke-linecap="round" stroke-linejoin="round"/>
<path d="M154.70,1193.90 L170.50,1200.40" stroke="#3f8cf0" stroke-width="1.9"/>
<path d="M154.70,1193.90 L146.90,1205.70" stroke="#3f8cf0" stroke-width="1.9"/>
<path d="M146.90,1205.70 L170.50,1200.40" stroke="#3f8cf0" stroke-width="1.9"/>
<path d="M154.70,1214.90 L170.50,1200.40" stroke="#3f8cf0" stroke-width="1.9"/>
<path d="M168.00,1217.60 L170.50,1200.40" stroke="#3f8cf0" stroke-width="1.9"/>
<circle cx="154.70" cy="1193.90" r="2.5" fill="#fff" stroke="#2f353b" stroke-width="1.8"/>
<circle cx="170.50" cy="1200.40" r="2.5" fill="#fff" stroke="#2f353b" stroke-width="1.8"/>
<circle cx="146.90" cy="1205.70" r="2.5" fill="#fff" stroke="#2f353b" stroke-width="1.8"/>
<circle cx="154.70" cy="1214.90" r="2.5" fill="#fff" stroke="#2f353b" stroke-width="1.8"/>
<circle cx="168.00" cy="1217.60" r="2.5" fill="#fff" stroke="#2f353b" stroke-width="1.8"/>
<rect x="987.30" y="361.50" width="5.70" height="13.30" stroke="#2f353b" stroke-width="2"/><rect x="998.90" y="354.20" width="5.90" height="20.60" stroke="#2f353b" stroke-width="2"/><rect x="1010.40" y="367.30" width="6.20" height="7.50" stroke="#2f353b" stroke-width="2"/><path d="M984.70,380.70 H1018.90" stroke="#3f8cf0" stroke-width="2.1"/>
<circle cx="1097.30" cy="416.5" r="8.7" fill="#e07dc8"/>
<circle cx="1189.70" cy="416.5" r="8.7" fill="#5970c8"/>
<circle cx="1285.70" cy="416.5" r="8.7" fill="#9dcb80"/>
<circle cx="1382.70" cy="416.5" r="8.7" fill="#f2c865"/>
<circle cx="1480.00" cy="416.5" r="8.7" fill="#e06b6b"/>
<polygon points="1576,407.6 1584.4,416 1576,424.4 1567.6,416" fill="#3f8cf5"/>
<rect x="1828.40" y="361.50" width="5.70" height="13.30" stroke="#2f353b" stroke-width="2"/><rect x="1840.00" y="354.20" width="5.90" height="20.60" stroke="#2f353b" stroke-width="2"/><rect x="1851.50" y="367.30" width="6.20" height="7.50" stroke="#2f353b" stroke-width="2"/><path d="M1825.80,380.70 H1860.00" stroke="#3f8cf0" stroke-width="2.1"/>
<rect x="1890.6" y="436.0" width="23.2" height="58.6" rx="8.5" fill="#f1f1f1"/><rect x="1918.4" y="436.0" width="23.2" height="58.6" rx="8.5" fill="#f1f1f1"/><rect x="1946.2" y="436.0" width="23.2" height="58.6" rx="8.5" fill="#f1f1f1"/><rect x="1974.0" y="436.0" width="23.2" height="58.6" rx="8.5" fill="#f1f1f1"/><rect x="2001.8" y="436.0" width="23.2" height="58.6" rx="8.5" fill="#f1f1f1"/><rect x="2029.6" y="436.0" width="23.2" height="58.6" rx="8.5" fill="#f1f1f1"/><rect x="2057.4" y="436.0" width="23.2" height="58.6" rx="8.5" fill="#f1f1f1"/><rect x="2085.2" y="436.0" width="23.2" height="58.6" rx="8.5" fill="#f1f1f1"/><rect x="2113.0" y="436.0" width="23.2" height="58.6" rx="8.5" fill="#f1f1f1"/><rect x="2140.8" y="436.0" width="23.2" height="58.6" rx="8.5" fill="#f1f1f1"/><rect x="2168.6" y="436.0" width="23.2" height="58.6" rx="8.5" fill="#f1f1f1"/><rect x="2196.4" y="436.0" width="23.2" height="58.6" rx="8.5" fill="#f1f1f1"/><rect x="2224.2" y="436.0" width="23.2" height="58.6" rx="8.5" fill="#f1f1f1"/><rect x="2252.0" y="436.0" width="23.2" height="58.6" rx="8.5" fill="#f1f1f1"/><rect x="2279.8" y="436.0" width="23.2" height="58.6" rx="8.5" fill="#f1f1f1"/><rect x="2307.6" y="436.0" width="23.2" height="58.6" rx="8.5" fill="#f1f1f1"/><rect x="2335.4" y="436.0" width="23.2" height="58.6" rx="8.5" fill="#f1f1f1"/><rect x="2363.2" y="436.0" width="23.2" height="58.6" rx="8.5" fill="#f1f1f1"/><rect x="2391.0" y="436.0" width="23.2" height="58.6" rx="8.5" fill="#f1f1f1"/><rect x="2418.8" y="436.0" width="23.2" height="58.6" rx="8.5" fill="#f1f1f1"/><rect x="2446.6" y="436.0" width="23.2" height="58.6" rx="8.5" fill="#f1f1f1"/><rect x="2474.4" y="436.0" width="23.2" height="58.6" rx="8.5" fill="#f1f1f1"/><rect x="2502.2" y="436.0" width="23.2" height="58.6" rx="8.5" fill="#f1f1f1"/><rect x="2530.0" y="436.0" width="23.2" height="58.6" rx="8.5" fill="#f1f1f1"/><rect x="2557.8" y="436.0" width="23.2" height="58.6" rx="8.5" fill="#f1f1f1"/><rect x="2585.6" y="436.0" width="23.2" height="58.6" rx="8.5" fill="#5b93cb"/><rect x="1890.6" y="499.4" width="23.2" height="58.6" rx="8.5" fill="#f1f1f1"/><rect x="1918.4" y="499.4" width="23.2" height="58.6" rx="8.5" fill="#f1f1f1"/><rect x="1946.2" y="499.4" width="23.2" height="58.6" rx="8.5" fill="#f1f1f1"/><rect x="1974.0" y="499.4" width="23.2" height="58.6" rx="8.5" fill="#f1f1f1"/><rect x="2001.8" y="499.4" width="23.2" height="58.6" rx="8.5" fill="#f1f1f1"/><rect x="2029.6" y="499.4" width="23.2" height="58.6" rx="8.5" fill="#f1f1f1"/><rect x="2057.4" y="499.4" width="23.2" height="58.6" rx="8.5" fill="#f1f1f1"/><rect x="2085.2" y="499.4" width="23.2" height="58.6" rx="8.5" fill="#f1f1f1"/><rect x="2113.0" y="499.4" width="23.2" height="58.6" rx="8.5" fill="#f1f1f1"/><rect x="2140.8" y="499.4" width="23.2" height="58.6" rx="8.5" fill="#f1f1f1"/><rect x="2168.6" y="499.4" width="23.2" height="58.6" rx="8.5" fill="#f1f1f1"/><rect x="2196.4" y="499.4" width="23.2" height="58.6" rx="8.5" fill="#f1f1f1"/><rect x="2224.2" y="499.4" width="23.2" height="58.6" rx="8.5" fill="#f1f1f1"/><rect x="2252.0" y="499.4" width="23.2" height="58.6" rx="8.5" fill="#f1f1f1"/><rect x="2279.8" y="499.4" width="23.2" height="58.6" rx="8.5" fill="#f1f1f1"/><rect x="2307.6" y="499.4" width="23.2" height="58.6" rx="8.5" fill="#f1f1f1"/><rect x="2335.4" y="499.4" width="23.2" height="58.6" rx="8.5" fill="#f1f1f1"/><rect x="2363.2" y="499.4" width="23.2" height="58.6" rx="8.5" fill="#f1f1f1"/><rect x="2391.0" y="499.4" width="23.2" height="58.6" rx="8.5" fill="#f1f1f1"/><rect x="2418.8" y="499.4" width="23.2" height="58.6" rx="8.5" fill="#f1f1f1"/><rect x="2446.6" y="499.4" width="23.2" height="58.6" rx="8.5" fill="#f1f1f1"/><rect x="2474.4" y="499.4" width="23.2" height="58.6" rx="8.5" fill="#f1f1f1"/><rect x="2502.2" y="499.4" width="23.2" height="58.6" rx="8.5" fill="#f1f1f1"/><rect x="2530.0" y="499.4" width="23.2" height="58.6" rx="8.5" fill="#f1f1f1"/><rect x="2557.8" y="499.4" width="23.2" height="58.6" rx="8.5" fill="#f1f1f1"/><rect x="1862.8" y="562.9" width="23.2" height="58.6" rx="8.5" fill="#f1f1f1"/><rect x="1890.6" y="562.9" width="23.2" height="58.6" rx="8.5" fill="#f1f1f1"/><rect x="1918.4" y="562.9" width="23.2" height="58.6" rx="8.5" fill="#f1f1f1"/><rect x="1946.2" y="562.9" width="23.2" height="58.6" rx="8.5" fill="#f1f1f1"/><rect x="1974.0" y="562.9" width="23.2" height="58.6" rx="8.5" fill="#f1f1f1"/><rect x="2001.8" y="562.9" width="23.2" height="58.6" rx="8.5" fill="#f1f1f1"/><rect x="2029.6" y="562.9" width="23.2" height="58.6" rx="8.5" fill="#f1f1f1"/><rect x="2057.4" y="562.9" width="23.2" height="58.6" rx="8.5" fill="#f1f1f1"/><rect x="2085.2" y="562.9" width="23.2" height="58.6" rx="8.5" fill="#f1f1f1"/><rect x="2113.0" y="562.9" width="23.2" height="58.6" rx="8.5" fill="#f1f1f1"/><rect x="2140.8" y="562.9" width="23.2" height="58.6" rx="8.5" fill="#f1f1f1"/><rect x="2168.6" y="562.9" width="23.2" height="58.6" rx="8.5" fill="#f1f1f1"/><rect x="2196.4" y="562.9" width="23.2" height="58.6" rx="8.5" fill="#f1f1f1"/><rect x="2224.2" y="562.9" width="23.2" height="58.6" rx="8.5" fill="#f1f1f1"/><rect x="2252.0" y="562.9" width="23.2" height="58.6" rx="8.5" fill="#f1f1f1"/><rect x="2279.8" y="562.9" width="23.2" height="58.6" rx="8.5" fill="#f1f1f1"/><rect x="2307.6" y="562.9" width="23.2" height="58.6" rx="8.5" fill="#f1f1f1"/><rect x="2335.4" y="562.9" width="23.2" height="58.6" rx="8.5" fill="#f1f1f1"/><rect x="2363.2" y="562.9" width="23.2" height="58.6" rx="8.5" fill="#f1f1f1"/><rect x="2391.0" y="562.9" width="23.2" height="58.6" rx="8.5" fill="#f1f1f1"/><rect x="2418.8" y="562.9" width="23.2" height="58.6" rx="8.5" fill="#f1f1f1"/><rect x="2446.6" y="562.9" width="23.2" height="58.6" rx="8.5" fill="#f1f1f1"/><rect x="2474.4" y="562.9" width="23.2" height="58.6" rx="8.5" fill="#f1f1f1"/><rect x="2502.2" y="562.9" width="23.2" height="58.6" rx="8.5" fill="#f1f1f1"/><rect x="2530.0" y="562.9" width="23.2" height="58.6" rx="8.5" fill="#f1f1f1"/><rect x="2557.8" y="562.9" width="23.2" height="58.6" rx="8.5" fill="#f1f1f1"/><rect x="1862.8" y="626.4" width="23.2" height="58.6" rx="8.5" fill="#f1f1f1"/><rect x="1890.6" y="626.4" width="23.2" height="58.6" rx="8.5" fill="#f1f1f1"/><rect x="1918.4" y="626.4" width="23.2" height="58.6" rx="8.5" fill="#f1f1f1"/><rect x="1946.2" y="626.4" width="23.2" height="58.6" rx="8.5" fill="#f1f1f1"/><rect x="1974.0" y="626.4" width="23.2" height="58.6" rx="8.5" fill="#f1f1f1"/><rect x="2001.8" y="626.4" width="23.2" height="58.6" rx="8.5" fill="#f1f1f1"/><rect x="2029.6" y="626.4" width="23.2" height="58.6" rx="8.5" fill="#f1f1f1"/><rect x="2057.4" y="626.4" width="23.2" height="58.6" rx="8.5" fill="#f1f1f1"/><rect x="2085.2" y="626.4" width="23.2" height="58.6" rx="8.5" fill="#f1f1f1"/><rect x="2113.0" y="626.4" width="23.2" height="58.6" rx="8.5" fill="#f1f1f1"/><rect x="2140.8" y="626.4" width="23.2" height="58.6" rx="8.5" fill="#f1f1f1"/><rect x="2168.6" y="626.4" width="23.2" height="58.6" rx="8.5" fill="#f1f1f1"/><rect x="2196.4" y="626.4" width="23.2" height="58.6" rx="8.5" fill="#f1f1f1"/><rect x="2224.2" y="626.4" width="23.2" height="58.6" rx="8.5" fill="#f1f1f1"/><rect x="2252.0" y="626.4" width="23.2" height="58.6" rx="8.5" fill="#f1f1f1"/><rect x="2279.8" y="626.4" width="23.2" height="58.6" rx="8.5" fill="#f1f1f1"/><rect x="2307.6" y="626.4" width="23.2" height="58.6" rx="8.5" fill="#f1f1f1"/><rect x="2335.4" y="626.4" width="23.2" height="58.6" rx="8.5" fill="#f1f1f1"/><rect x="2363.2" y="626.4" width="23.2" height="58.6" rx="8.5" fill="#f1f1f1"/><rect x="2391.0" y="626.4" width="23.2" height="58.6" rx="8.5" fill="#f1f1f1"/><rect x="2418.8" y="626.4" width="23.2" height="58.6" rx="8.5" fill="#f1f1f1"/><rect x="2446.6" y="626.4" width="23.2" height="58.6" rx="8.5" fill="#f1f1f1"/><rect x="2474.4" y="626.4" width="23.2" height="58.6" rx="8.5" fill="#f1f1f1"/><rect x="2502.2" y="626.4" width="23.2" height="58.6" rx="8.5" fill="#f1f1f1"/><rect x="2530.0" y="626.4" width="23.2" height="58.6" rx="8.5" fill="#f1f1f1"/><rect x="2557.8" y="626.4" width="23.2" height="58.6" rx="8.5" fill="#f1f1f1"/><rect x="1862.8" y="689.8" width="23.2" height="58.6" rx="8.5" fill="#f1f1f1"/><rect x="1890.6" y="689.8" width="23.2" height="58.6" rx="8.5" fill="#f1f1f1"/><rect x="1918.4" y="689.8" width="23.2" height="58.6" rx="8.5" fill="#f1f1f1"/><rect x="1946.2" y="689.8" width="23.2" height="58.6" rx="8.5" fill="#f1f1f1"/><rect x="1974.0" y="689.8" width="23.2" height="58.6" rx="8.5" fill="#f1f1f1"/><rect x="2001.8" y="689.8" width="23.2" height="58.6" rx="8.5" fill="#f1f1f1"/><rect x="2029.6" y="689.8" width="23.2" height="58.6" rx="8.5" fill="#f1f1f1"/><rect x="2057.4" y="689.8" width="23.2" height="58.6" rx="8.5" fill="#f1f1f1"/><rect x="2085.2" y="689.8" width="23.2" height="58.6" rx="8.5" fill="#f1f1f1"/><rect x="2113.0" y="689.8" width="23.2" height="58.6" rx="8.5" fill="#f1f1f1"/><rect x="2140.8" y="689.8" width="23.2" height="58.6" rx="8.5" fill="#f1f1f1"/><rect x="2168.6" y="689.8" width="23.2" height="58.6" rx="8.5" fill="#f1f1f1"/><rect x="2196.4" y="689.8" width="23.2" height="58.6" rx="8.5" fill="#f1f1f1"/><rect x="2224.2" y="689.8" width="23.2" height="58.6" rx="8.5" fill="#f1f1f1"/><rect x="2252.0" y="689.8" width="23.2" height="58.6" rx="8.5" fill="#f1f1f1"/><rect x="2279.8" y="689.8" width="23.2" height="58.6" rx="8.5" fill="#f1f1f1"/><rect x="2307.6" y="689.8" width="23.2" height="58.6" rx="8.5" fill="#f1f1f1"/><rect x="2335.4" y="689.8" width="23.2" height="58.6" rx="8.5" fill="#f1f1f1"/><rect x="2363.2" y="689.8" width="23.2" height="58.6" rx="8.5" fill="#f1f1f1"/><rect x="2391.0" y="689.8" width="23.2" height="58.6" rx="8.5" fill="#f1f1f1"/><rect x="2418.8" y="689.8" width="23.2" height="58.6" rx="8.5" fill="#f1f1f1"/><rect x="2446.6" y="689.8" width="23.2" height="58.6" rx="8.5" fill="#f1f1f1"/><rect x="2474.4" y="689.8" width="23.2" height="58.6" rx="8.5" fill="#f1f1f1"/><rect x="2502.2" y="689.8" width="23.2" height="58.6" rx="8.5" fill="#f1f1f1"/><rect x="2530.0" y="689.8" width="23.2" height="58.6" rx="8.5" fill="#f1f1f1"/><rect x="2557.8" y="689.8" width="23.2" height="58.6" rx="8.5" fill="#f1f1f1"/><rect x="1862.8" y="753.2" width="23.2" height="58.6" rx="8.5" fill="#f1f1f1"/><rect x="1890.6" y="753.2" width="23.2" height="58.6" rx="8.5" fill="#f1f1f1"/><rect x="1918.4" y="753.2" width="23.2" height="58.6" rx="8.5" fill="#f1f1f1"/><rect x="1946.2" y="753.2" width="23.2" height="58.6" rx="8.5" fill="#f1f1f1"/><rect x="1974.0" y="753.2" width="23.2" height="58.6" rx="8.5" fill="#f1f1f1"/><rect x="2001.8" y="753.2" width="23.2" height="58.6" rx="8.5" fill="#f1f1f1"/><rect x="2029.6" y="753.2" width="23.2" height="58.6" rx="8.5" fill="#f1f1f1"/><rect x="2057.4" y="753.2" width="23.2" height="58.6" rx="8.5" fill="#f1f1f1"/><rect x="2085.2" y="753.2" width="23.2" height="58.6" rx="8.5" fill="#f1f1f1"/><rect x="2113.0" y="753.2" width="23.2" height="58.6" rx="8.5" fill="#f1f1f1"/><rect x="2140.8" y="753.2" width="23.2" height="58.6" rx="8.5" fill="#f1f1f1"/><rect x="2168.6" y="753.2" width="23.2" height="58.6" rx="8.5" fill="#f1f1f1"/><rect x="2196.4" y="753.2" width="23.2" height="58.6" rx="8.5" fill="#f1f1f1"/><rect x="2224.2" y="753.2" width="23.2" height="58.6" rx="8.5" fill="#f1f1f1"/><rect x="2252.0" y="753.2" width="23.2" height="58.6" rx="8.5" fill="#f1f1f1"/><rect x="2279.8" y="753.2" width="23.2" height="58.6" rx="8.5" fill="#f1f1f1"/><rect x="2307.6" y="753.2" width="23.2" height="58.6" rx="8.5" fill="#f1f1f1"/><rect x="2335.4" y="753.2" width="23.2" height="58.6" rx="8.5" fill="#f1f1f1"/><rect x="2363.2" y="753.2" width="23.2" height="58.6" rx="8.5" fill="#f1f1f1"/><rect x="2391.0" y="753.2" width="23.2" height="58.6" rx="8.5" fill="#f1f1f1"/><rect x="2418.8" y="753.2" width="23.2" height="58.6" rx="8.5" fill="#f1f1f1"/><rect x="2446.6" y="753.2" width="23.2" height="58.6" rx="8.5" fill="#f1f1f1"/><rect x="2474.4" y="753.2" width="23.2" height="58.6" rx="8.5" fill="#f1f1f1"/><rect x="2502.2" y="753.2" width="23.2" height="58.6" rx="8.5" fill="#f1f1f1"/><rect x="2530.0" y="753.2" width="23.2" height="58.6" rx="8.5" fill="#f1f1f1"/><rect x="2557.8" y="753.2" width="23.2" height="58.6" rx="8.5" fill="#f1f1f1"/><rect x="1862.8" y="816.7" width="23.2" height="58.6" rx="8.5" fill="#f1f1f1"/><rect x="1890.6" y="816.7" width="23.2" height="58.6" rx="8.5" fill="#f1f1f1"/><rect x="1918.4" y="816.7" width="23.2" height="58.6" rx="8.5" fill="#f1f1f1"/><rect x="1946.2" y="816.7" width="23.2" height="58.6" rx="8.5" fill="#f1f1f1"/><rect x="1974.0" y="816.7" width="23.2" height="58.6" rx="8.5" fill="#f1f1f1"/><rect x="2001.8" y="816.7" width="23.2" height="58.6" rx="8.5" fill="#f1f1f1"/><rect x="2029.6" y="816.7" width="23.2" height="58.6" rx="8.5" fill="#f1f1f1"/><rect x="2057.4" y="816.7" width="23.2" height="58.6" rx="8.5" fill="#f1f1f1"/><rect x="2085.2" y="816.7" width="23.2" height="58.6" rx="8.5" fill="#f1f1f1"/><rect x="2113.0" y="816.7" width="23.2" height="58.6" rx="8.5" fill="#f1f1f1"/><rect x="2140.8" y="816.7" width="23.2" height="58.6" rx="8.5" fill="#f1f1f1"/><rect x="2168.6" y="816.7" width="23.2" height="58.6" rx="8.5" fill="#f1f1f1"/><rect x="2196.4" y="816.7" width="23.2" height="58.6" rx="8.5" fill="#f1f1f1"/><rect x="2224.2" y="816.7" width="23.2" height="58.6" rx="8.5" fill="#f1f1f1"/><rect x="2252.0" y="816.7" width="23.2" height="58.6" rx="8.5" fill="#f1f1f1"/><rect x="2279.8" y="816.7" width="23.2" height="58.6" rx="8.5" fill="#f1f1f1"/><rect x="2307.6" y="816.7" width="23.2" height="58.6" rx="8.5" fill="#f1f1f1"/><rect x="2335.4" y="816.7" width="23.2" height="58.6" rx="8.5" fill="#f1f1f1"/><rect x="2363.2" y="816.7" width="23.2" height="58.6" rx="8.5" fill="#f1f1f1"/><rect x="2391.0" y="816.7" width="23.2" height="58.6" rx="8.5" fill="#f1f1f1"/><rect x="2418.8" y="816.7" width="23.2" height="58.6" rx="8.5" fill="#f1f1f1"/><rect x="2446.6" y="816.7" width="23.2" height="58.6" rx="8.5" fill="#f1f1f1"/><rect x="2474.4" y="816.7" width="23.2" height="58.6" rx="8.5" fill="#f1f1f1"/><rect x="2502.2" y="816.7" width="23.2" height="58.6" rx="8.5" fill="#f1f1f1"/><rect x="2530.0" y="816.7" width="23.2" height="58.6" rx="8.5" fill="#f1f1f1"/><rect x="2557.8" y="816.7" width="23.2" height="58.6" rx="8.5" fill="#f1f1f1"/>
<path d="M996,934.1 H1007.8 L1010.4,942.2 L1013.1,934.1 H1017.9 V966.2 H996 V960.6 L987.4,948.9 L990.5,945.6 L996,950.2 Z" stroke="#2f353b" stroke-width="2" stroke-linejoin="miter"/>
<path d="M1003.4,948 V951.4 M1003.4,955.3 V967.3" stroke="#3f8cf0" stroke-width="2.1"/>
<circle cx="2541.6" cy="1445.3" r="4.3" fill="#fff"/></svg>
<span id="t0" class="t " style="left:1211.01px;top:84.11px;font-size:25.38px;color:#444545;font-weight:700;transform:scaleX(1.0530);">Environment: Main | Noop</span>
<span id="t1" class="t " style="left:482.93px;top:150.86px;font-size:24.02px;color:#3f8cf0;">LOCAL</span>
<span id="t2" class="t " style="left:484.87px;top:182.00px;font-size:28.70px;color:#fff;font-weight:700;transform:scaleX(0.9860);">Workshop</span>
<span id="t3" class="t " style="left:728.55px;top:150.86px;font-size:24.02px;color:#3f8cf0;transform:scaleX(0.9936);">APPLICATION</span>
<span id="t4" class="t " style="left:727.39px;top:182.00px;font-size:28.70px;color:#fff;font-weight:700;transform:scaleX(0.9950);">Nodejs Vue Template Todo App</span>
<span id="t5" class="t " style="left:1261.63px;top:150.86px;font-size:24.02px;color:#3f8cf0;transform:scaleX(1.0020);">ENVIRONMENT</span>
<span id="t6" class="t " style="left:1261.82px;top:182.00px;font-size:28.70px;color:#fff;font-weight:700;transform:scaleX(1.0299);">Main</span>
<span id="t7" class="t " style="left:123.20px;top:255.51px;font-size:54.08px;color:#212529;font-weight:700;transform:scaleX(0.9410);">Environment</span>
<span id="t8" class="t " style="left:445.65px;top:266.08px;font-size:41.60px;color:#212529;transform:scaleX(1.0994);-webkit-text-stroke:1.30px #212529;">Main</span>
<span id="t9" class="t " style="left:190.76px;top:350.40px;font-size:34.84px;color:#2f353b;transform:scaleX(1.0621);-webkit-text-stroke:1.00px #2f353b;">Environment Summary</span>
<span id="t10" class="t " style="left:576.81px;top:357.01px;font-size:27.04px;color:#2f353b;transform:scaleX(1.1241);-webkit-text-stroke:0.70px #2f353b;">Main</span>
<span id="t11" class="t " style="left:462.83px;top:425.40px;font-size:32.24px;color:#fff;font-weight:700;transform:scaleX(0.9642);">ACTIVE</span>
<span id="t12" class="t " style="left:185.96px;top:521.09px;font-size:26.94px;color:#2f353b;font-weight:700;transform:scaleX(0.9550);">ACTIVE STACKS</span>
<span id="t13" class="t " style="left:156.16px;top:588.32px;font-size:29.74px;color:#3f8cf0;transform:scaleX(1.0629);-webkit-text-stroke:0.45px #3f8cf0;">Stack #1</span>
<span id="t14" class="t " style="left:813.79px;top:590.19px;font-size:25.17px;color:#5a5e63;transform:scaleX(0.9749);-webkit-text-stroke:0.40px #5a5e63;">&lt; 1m ago</span>
<span id="t15" class="t " style="left:184.87px;top:674.29px;font-size:26.94px;color:#2f353b;font-weight:700;transform:scaleX(0.9586);">LATEST DEPLOYMENTS</span>
<span id="t16" class="t " style="left:716.10px;top:674.03px;font-size:27.25px;color:#212529;transform:scaleX(1.0280);-webkit-text-stroke:0.50px #212529;">New Deployment</span>
<span id="t17" class="t " style="left:154.97px;top:742.52px;font-size:29.74px;color:#3f8cf0;transform:scaleX(1.0760);-webkit-text-stroke:0.45px #3f8cf0;">Deploy #1</span>
<span id="t18" class="t " style="left:641.01px;top:743.59px;font-size:25.17px;color:#5a5e63;transform:scaleX(1.0221);-webkit-text-stroke:0.40px #5a5e63;">2m ago</span>
<span id="t19" class="t " style="left:774.73px;top:743.59px;font-size:25.17px;color:#5a5e63;transform:scaleX(0.9777);-webkit-text-stroke:0.40px #5a5e63;">1m 29s</span>
<span id="t20" class="t " style="left:185.95px;top:827.49px;font-size:26.94px;color:#2f353b;font-weight:700;transform:scaleX(0.9634);">ASSOCIATED ENDPOINTS</span>
<span id="t21" class="t " style="left:754.80px;top:827.33px;font-size:27.25px;color:#212529;transform:scaleX(1.0291);-webkit-text-stroke:0.50px #212529;">New Endpoint</span>
<span id="t22" class="t " style="left:155.37px;top:895.62px;font-size:29.74px;color:#3f8cf0;transform:scaleX(1.1299);-webkit-text-stroke:0.45px #3f8cf0;">nodejs-vue-template-todo-app.local.noop.app</span>
<span id="t23" class="t " style="left:184.92px;top:980.49px;font-size:26.94px;color:#2f353b;font-weight:700;transform:scaleX(0.9339);">RESOURCES</span>
<span id="t24" class="t " style="left:747.61px;top:980.53px;font-size:27.25px;color:#212529;transform:scaleX(1.0230);-webkit-text-stroke:0.50px #212529;">New Resource</span>
<span id="t25" class="t " style="left:157.18px;top:1048.72px;font-size:29.74px;color:#3f8cf0;transform:scaleX(1.0775);-webkit-text-stroke:0.45px #3f8cf0;">TodoItems</span>
<span id="t26" class="t " style="left:157.18px;top:1107.12px;font-size:29.74px;color:#3f8cf0;transform:scaleX(1.0838);-webkit-text-stroke:0.45px #3f8cf0;">TodoUploads</span>
<span id="t27" class="t " style="left:185.55px;top:1193.19px;font-size:26.94px;color:#2f353b;font-weight:700;transform:scaleX(0.9485);">CLUSTER</span>
<span id="t28" class="t " style="left:157.85px;top:1260.12px;font-size:29.74px;color:#212529;transform:scaleX(1.1351);-webkit-text-stroke:0.45px #212529;">workshop-vm</span>
<span id="t29" class="t " style="left:810.90px;top:1261.76px;font-size:26.62px;color:#fff;font-weight:700;transform:scaleX(0.9535);">LOCAL</span>
<span id="t30" class="t " style="left:1033.47px;top:350.40px;font-size:34.84px;color:#2f353b;transform:scaleX(1.0623);-webkit-text-stroke:1.00px #2f353b;">Traffic Response Counts</span>
<span id="t31" class="t " style="left:1448.68px;top:357.01px;font-size:27.04px;color:#2f353b;transform:scaleX(1.1370);-webkit-text-stroke:0.70px #2f353b;">Main</span>
<span id="t32" class="t " style="left:1118.56px;top:404.16px;font-size:22.26px;color:#333;transform:scaleX(1.0273);-webkit-text-stroke:0.40px #333;">100s</span>
<span id="t33" class="t " style="left:1211.07px;top:404.16px;font-size:22.26px;color:#333;transform:scaleX(1.1009);-webkit-text-stroke:0.40px #333;">200s</span>
<span id="t34" class="t " style="left:1308.07px;top:404.16px;font-size:22.26px;color:#333;transform:scaleX(1.1009);-webkit-text-stroke:0.40px #333;">300s</span>
<span id="t35" class="t " style="left:1404.94px;top:404.16px;font-size:22.26px;color:#333;transform:scaleX(1.1037);-webkit-text-stroke:0.40px #333;">400s</span>
<span id="t36" class="t " style="left:1501.73px;top:404.16px;font-size:22.26px;color:#333;transform:scaleX(1.0869);-webkit-text-stroke:0.40px #333;">500s</span>
<span id="t37" class="t " style="left:1596.70px;top:404.16px;font-size:22.26px;color:#333;transform:scaleX(1.0413);-webkit-text-stroke:0.40px #333;">Events</span>
<span id="t38" class="t " style="left:995.23px;top:435.16px;font-size:22.26px;color:#6e7079;transform:scaleX(0.6880);">1</span>
<span id="t39" class="t " style="left:995.21px;top:808.86px;font-size:22.26px;color:#6e7079;transform:scaleX(1.1376);">0</span>
<span id="t40" class="t " style="left:-1.06px;top:-17.16px;font-size:22.40px;color:#53a551;font-weight:700;font-family:'Liberation Mono', monospace;-webkit-text-stroke:0.50px #53a551;left:1740.4px;top:825.3px;transform:rotate(-90deg);letter-spacing:0px;">deploy#1</span>
<span id="t41" class="t " style="left:982.26px;top:848.68px;font-size:22.46px;color:#6e7079;font-weight:700;transform:scaleX(1.2700);text-shadow:0 0 3px #fff,0 0 3px #fff,0 0 4px #fff,0 0 5px #fff,0 0 6px #fff,0 0 7px #fff,0 0 9px #fff,0 0 11px #fff,0 0 12px #fff;">:00</span>
<span id="t42" class="t " style="left:1061.85px;top:848.68px;font-size:22.46px;color:#6e7079;transform:scaleX(1.0202);text-shadow:0 0 3px #fff,0 0 3px #fff,0 0 4px #fff,0 0 5px #fff,0 0 6px #fff,0 0 7px #fff,0 0 9px #fff,0 0 11px #fff,0 0 12px #fff;">16:30</span>
<span id="t43" class="t " style="left:1158.84px;top:848.68px;font-size:22.46px;color:#6e7079;font-weight:700;transform:scaleX(1.0345);text-shadow:0 0 3px #fff,0 0 3px #fff,0 0 4px #fff,0 0 5px #fff,0 0 6px #fff,0 0 7px #fff,0 0 9px #fff,0 0 11px #fff,0 0 12px #fff;">17:00</span>
<span id="t44" class="t " style="left:1258.63px;top:848.68px;font-size:22.46px;color:#6e7079;transform:scaleX(0.9773);text-shadow:0 0 3px #fff,0 0 3px #fff,0 0 4px #fff,0 0 5px #fff,0 0 6px #fff,0 0 7px #fff,0 0 9px #fff,0 0 11px #fff,0 0 12px #fff;">17:30</span>
<span id="t45" class="t " style="left:1353.79px;top:848.68px;font-size:22.46px;color:#6e7079;font-weight:700;transform:scaleX(1.0653);text-shadow:0 0 3px #fff,0 0 3px #fff,0 0 4px #fff,0 0 5px #fff,0 0 6px #fff,0 0 7px #fff,0 0 9px #fff,0 0 11px #fff,0 0 12px #fff;">18:00</span>
<span id="t46" class="t " style="left:1453.58px;top:848.68px;font-size:22.46px;color:#6e7079;transform:scaleX(1.0072);text-shadow:0 0 3px #fff,0 0 3px #fff,0 0 4px #fff,0 0 5px #fff,0 0 6px #fff,0 0 7px #fff,0 0 9px #fff,0 0 11px #fff,0 0 12px #fff;">18:30</span>
<span id="t47" class="t " style="left:1548.78px;top:848.68px;font-size:22.46px;color:#6e7079;font-weight:700;transform:scaleX(1.0708);text-shadow:0 0 3px #fff,0 0 3px #fff,0 0 4px #fff,0 0 5px #fff,0 0 6px #fff,0 0 7px #fff,0 0 9px #fff,0 0 11px #fff,0 0 12px #fff;">19:00</span>
<span id="t48" class="t " style="left:1650.31px;top:848.68px;font-size:22.46px;color:#6e7079;transform:scaleX(0.9885);text-shadow:0 0 3px #fff,0 0 3px #fff,0 0 4px #fff,0 0 5px #fff,0 0 6px #fff,0 0 7px #fff,0 0 9px #fff,0 0 11px #fff,0 0 12px #fff;">19:30</span>
<span id="t49" class="t " style="left:1871.90px;top:350.40px;font-size:34.84px;color:#2f353b;transform:scaleX(1.0848);-webkit-text-stroke:1.00px #2f353b;">Deployment History</span>
<span id="t50" class="t " style="left:2210.56px;top:357.01px;font-size:27.04px;color:#2f353b;transform:scaleX(1.1461);-webkit-text-stroke:0.70px #2f353b;">Main</span>
<span id="t51" class="t " style="left:1888.67px;top:405.71px;font-size:21.84px;color:#828282;transform:scaleX(0.9712);-webkit-text-stroke:0.30px #828282;">JAN</span>
<span id="t52" class="t " style="left:1889.80px;top:405.71px;font-size:21.84px;color:#828282;transform:scaleX(0.9491);-webkit-text-stroke:0.30px #828282;">FEB</span>
<span id="t53" class="t " style="left:1998.32px;top:405.71px;font-size:21.84px;color:#828282;transform:scaleX(1.0501);-webkit-text-stroke:0.30px #828282;">MAR</span>
<span id="t54" class="t " style="left:2139.16px;top:405.71px;font-size:21.84px;color:#828282;transform:scaleX(0.9718);-webkit-text-stroke:0.30px #828282;">APR</span>
<span id="t55" class="t " style="left:2248.53px;top:405.71px;font-size:21.84px;color:#828282;transform:scaleX(1.0435);-webkit-text-stroke:0.30px #828282;">MAY</span>
<span id="t56" class="t " style="left:2361.23px;top:405.71px;font-size:21.84px;color:#828282;transform:scaleX(1.0885);-webkit-text-stroke:0.30px #828282;">JUN</span>
<span id="t57" class="t " style="left:2500.24px;top:405.71px;font-size:21.84px;color:#828282;transform:scaleX(1.0434);-webkit-text-stroke:0.30px #828282;">JUL</span>
<span id="t58" class="t " style="left:1830.17px;top:516.61px;font-size:21.42px;color:#777;transform:scaleX(1.3260);">M</span>
<span id="t59" class="t " style="left:1830.60px;top:643.51px;font-size:21.42px;color:#777;transform:scaleX(1.0373);">W</span>
<span id="t60" class="t " style="left:1838.30px;top:770.41px;font-size:21.42px;color:#777;transform:scaleX(1.0800);">F</span>
<span id="t61" class="t " style="left:1031.24px;top:933.20px;font-size:34.84px;color:#2f353b;transform:scaleX(1.0690);-webkit-text-stroke:1.00px #2f353b;">Environment Logs</span>
<span id="t62" class="t " style="left:1339.99px;top:939.81px;font-size:27.04px;color:#2f353b;transform:scaleX(1.1315);-webkit-text-stroke:0.70px #2f353b;">Main</span>
<span id="t147" class="t " style="left:1681.59px;top:1433.07px;font-size:24.96px;color:#5a5e62;transform:scaleX(1.0641);-webkit-text-stroke:0.30px #5a5e62;">38-48 of 48 Entries</span>
<span id="t148" class="t " style="left:2551.76px;top:1434.73px;font-size:22.05px;color:#fff;font-weight:700;transform:scaleX(1.1140);">LIVE</span>
</body></html>
